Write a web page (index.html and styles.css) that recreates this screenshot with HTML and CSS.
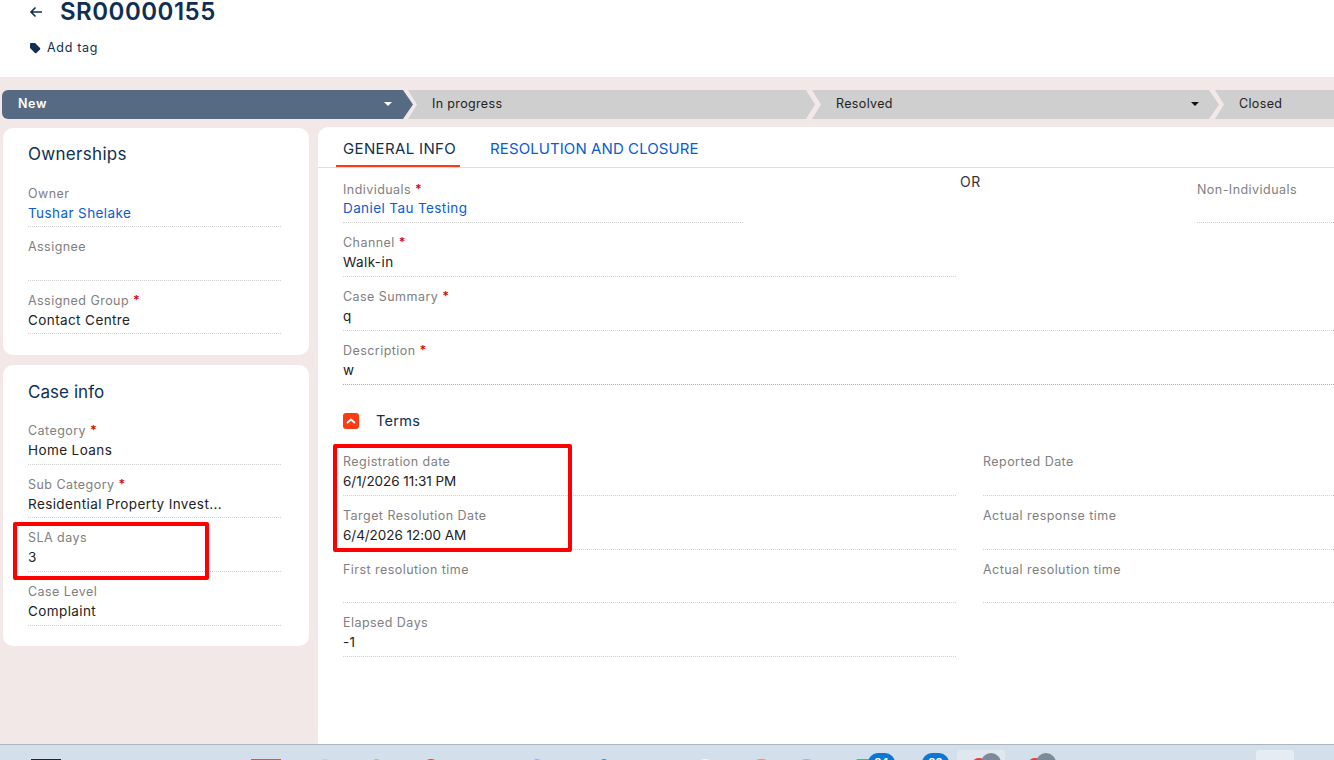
FILE: index.html
```html
<!DOCTYPE html>
<html lang="en">
<head>
<meta charset="utf-8">
<title>SR00000155</title>
<link rel="stylesheet" href="styles.css">
</head>
<body>
<div class="app">
  <header class="head">
    <div class="head-top">
      <svg class="back" viewBox="0 0 14 12" width="14" height="12"><path d="M13 6H2M6.500 1.500 2 6l4.500 4.500" fill="none" stroke="#0f2f52" stroke-width="1.600"/></svg>
      <h1>SR00000155</h1>
    </div>
    <div class="tag">
      <svg viewBox="0 0 12 12" width="12" height="12"><path d="M1 2.200C1 1.500 1.500 1 2.200 1H6l5 5c.4.4.4 1 0 1.400L7.400 11c-.4.4-1 .4-1.400 0L1 6Z" fill="#0f2f52"/></svg>
      <span>Add tag</span>
    </div>
  </header>
  <main class="main">
    <nav class="path">
      <div class="step step-new"><span>New</span><i class="caret caret-w"></i></div>
      <div class="step step-mid"><span>In progress</span></div>
      <div class="step step-res"><span>Resolved</span><i class="caret"></i></div>
      <div class="step step-end"><span>Closed</span></div>
    </nav>
    <div class="cols">
      <aside class="side">
        <section class="card card-own">
          <h2>Ownerships</h2>
          <div class="field"><label>Owner</label><div class="val link">Tushar Shelake</div></div>
          <div class="field"><label>Assignee</label><div class="val"></div></div>
          <div class="field"><label>Assigned Group <b>*</b></label><div class="val">Contact Centre</div></div>
        </section>
        <section class="card card-case">
          <h2>Case info</h2>
          <div class="field"><label>Category <b>*</b></label><div class="val">Home Loans</div></div>
          <div class="field"><label>Sub Category <b>*</b></label><div class="val">Residential Property Invest...</div></div>
          <div class="field"><label>SLA days</label><div class="val">3</div></div>
          <div class="field"><label>Case Level</label><div class="val">Complaint</div></div>
          <div class="mark mark-sla"></div>
        </section>
      </aside>
      <section class="panel">
        <div class="tabs">
          <div class="tab tab-on">GENERAL INFO</div>
          <div class="tab tab-off">RESOLUTION AND CLOSURE</div>
        </div>
        <div class="body">
          <div class="row-ind">
            <div class="field f-ind"><label>Individuals <b>*</b></label><div class="val link">Daniel Tau Testing</div></div>
            <div class="or">OR</div>
            <div class="field f-non"><label>Non-Individuals</label><div class="val"></div></div>
          </div>
          <div class="field f-half"><label>Channel <b>*</b></label><div class="val">Walk-in</div></div>
          <div class="field"><label>Case Summary <b>*</b></label><div class="val">q</div></div>
          <div class="field f-desc"><label>Description <b>*</b></label><div class="val">w</div></div>
          <div class="terms">
            <span class="toggle"><svg viewBox="0 0 10 6" width="10" height="6"><path d="M1 5 5 1.500 9 5" fill="none" stroke="#fff" stroke-width="1.800"/></svg></span>
            <span>Terms</span>
          </div>
          <div class="grid">
            <div class="mark mark-reg"></div>
            <div class="field"><label>Registration date</label><div class="val val-date">6/1/2026 11:31 PM</div></div>
            <div class="field"><label>Reported Date</label><div class="val"></div></div>
            <div class="field"><label>Target Resolution Date</label><div class="val val-date">6/4/2026 12:00 AM</div></div>
            <div class="field"><label>Actual response time</label><div class="val"></div></div>
            <div class="field"><label>First resolution time</label><div class="val"></div></div>
            <div class="field"><label>Actual resolution time</label><div class="val"></div></div>
            <div class="field"><label>Elapsed Days</label><div class="val">-1</div></div>
          </div>
        </div>
      </section>
    </div>
  </main>
  <footer class="taskbar">
    <i class="tb tb-black"></i>
    <i class="tb tb-red"></i>
    <i class="tb dot d1"></i>
    <i class="tb dot d2"></i>
    <i class="tb dot d3"></i>
    <i class="tb dot d4"></i>
    <i class="tb dot d5"></i>
    <i class="tb dot d6"></i>
    <i class="tb dot d7"></i>
    <i class="tb dot d8"></i>
    <i class="tb dot d9"></i>
    <i class="tb tb-tile"></i>
    <i class="tb tb-tile2"></i>
    <i class="tb dot d10"></i>
    <i class="tb dot d11"></i>
    <i class="tb tb-b1">84</i>
    <i class="tb tb-b2">80</i>
    <i class="tb tb-g1"></i>
    <i class="tb tb-g2"></i>
  </footer>
</div>
</body>
</html>
```
FILE: styles.css
```css
* { box-sizing: border-box; }
html, body { margin: 0; height: 100%; }
body { font-family: "Inter", "Noto Sans", sans-serif; color: #222; overflow: hidden; background: #fff; }
.app { width: 1334px; height: 760px; display: flex; flex-direction: column; overflow: hidden; position: relative; }

.head { height: 77px; flex: none; background: #fff; padding: 0 0 0 29px; color: #0f2f52; }
.head-top { display: flex; align-items: center; gap: 17px; height: 23px; }
.back { flex: none; }
h1 { margin: 0; font-size: 24px; font-weight: 600; line-height: 23px; letter-spacing: .5px; }
.tag { display: flex; align-items: center; gap: 6px; margin-top: 17px; font-size: 12.500px; line-height: 16px; letter-spacing: .7px; }

.main { flex: 1; background: #f2e8e8; padding-top: 13px; min-height: 0; display: flex; flex-direction: column; }
.path { display: flex; height: 29px; padding-left: 2px; flex: none; }
.step { height: 29px; padding-bottom: 2px; display: flex; align-items: center; justify-content: space-between; background: #cfcfcf; font-size: 12.500px; letter-spacing: .35px; color: #222; flex: none; }
.step-new { width: 411px; margin-right: -5px; padding-left: 16px; padding-right: 21px; background: #566b83; color: #fff; border-radius: 6px 0 0 6px; font-weight: 600; letter-spacing: .6px; clip-path: polygon(0 0, 401px 0, 100% 50%, 401px 100%, 0 100%); }
.step-mid { width: 407px; margin-right: -3px; padding-left: 24px; clip-path: polygon(0 0, 398px 0, 100% 50%, 398px 100%, 0 100%, 9px 50%); }
.step-res { width: 407px; margin-right: -4px; padding-left: 24px; padding-right: 20px; clip-path: polygon(0 0, 397px 0, 100% 50%, 397px 100%, 0 100%, 9px 50%); }
.step-end { flex: 1; padding-left: 24px; clip-path: polygon(0 0, 100% 0, 100% 100%, 0 100%, 9px 50%); }
.caret { width: 0; height: 0; border: 4px solid transparent; border-top: 4px solid #111; border-bottom: 0; }
.caret-w { border-top-color: #fff; }

.cols { display: flex; flex: 1; min-height: 0; padding: 8px 0 0 3px; gap: 9px; }
.side { width: 306px; flex: none; display: flex; flex-direction: column; gap: 10px; padding-top: 1px; }
.card { background: #fff; border-radius: 10px; padding: 14px 28px 20px 25px; position: relative; }
.card-own { height: 227px; }
.card-case { height: 281px; padding-top: 15px; }
h2 { margin: 0 0 14.500px; font-size: 17px; font-weight: 400; line-height: 24px; letter-spacing: .3px; color: #0f2f52; }
.card-case h2 { margin-bottom: 14px; letter-spacing: .05px; }

.field { height: 46.670px; margin-bottom: 7px; padding-top: 4px; border-bottom: 1px dotted #d0d0d0; }
.field label { display: block; font-size: 12.500px; line-height: 18px; letter-spacing: .45px; color: #808080; }
.field label b { color: #d00; font-weight: 600; }
.val { font-size: 13.500px; line-height: 20px; letter-spacing: .4px; color: #222; min-height: 20px; white-space: nowrap; }
.val-date { letter-spacing: -.05px; }
.link { color: #0b5cd0; }

.panel { flex: 1; background: #fff; border-radius: 10px 0 0 0; min-width: 0; }
.tabs { display: flex; height: 41px; padding-left: 18px; gap: 23px; border-bottom: 1px solid #ddd; }
.tab { padding: 0 7px; line-height: 43px; font-size: 15px; letter-spacing: .35px; color: #0b5cd0; height: 40px; }
.tab-on { color: #0f2f52; padding-right: 4px; border-bottom: 2px solid #fb3c14; }
.tab-off { letter-spacing: .08px; }

.body { padding: 0 0 0 25px; }
.row-ind { display: flex; height: 62.330px; }
.f-ind { width: 400px; height: 54.670px; padding-top: 13px; margin: 0; }
.f-ind .val { margin-top: -1px; }
.or { width: 454px; padding: 5px 0 0 217px; font-size: 14px; line-height: 18px; letter-spacing: .5px; color: #333; }
.f-non { flex: 1; height: 54.670px; padding-top: 13px; margin: 0; }
.f-half { width: 613px; }
.f-desc { border-bottom-color: #aaa; height: 47px; margin: 0; }

.terms { display: flex; align-items: center; gap: 17px; height: 24px; margin-top: 24.330px; font-size: 14.500px; letter-spacing: .3px; color: #0f2f52; }
.toggle { width: 16px; height: 16px; border-radius: 3px; background: #fb3c14; display: flex; align-items: center; justify-content: center; }

.grid { display: grid; grid-template-columns: 613px 351px; column-gap: 27px; margin-top: 16px; position: relative; }
.grid .field { height: 46.800px; }
.mark { position: absolute; border: 4px solid #f00; border-radius: 2px; pointer-events: none; }
.mark-reg { left: -10px; top: -5px; width: 239px; height: 108px; }
.mark-sla { left: 10px; top: 157px; width: 196px; height: 58px; }

.taskbar { height: 16px; flex: none; position: relative; background: #d3e0eb; border-top: 1px solid #aeb7c0; overflow: hidden; }
.tb { position: absolute; display: block; font-style: normal; }
.tb-black { left: 31px; top: 14px; width: 30px; height: 4px; background: #1e2430; }
.tb-red { left: 251px; top: 14px; width: 30px; height: 4px; background: #ef4a3c; }
.dot { top: 14px; height: 8px; border-radius: 50%; }
.d1 { left: 320px; width: 10px; background: #c3cbd2; }
.d2 { left: 372px; width: 9px; background: #aeb6ba; }
.d3 { left: 425px; width: 12px; background: #e5443c; }
.d4 { left: 533px; width: 8px; background: #a8a8e8; }
.d5 { left: 600px; width: 8px; background: #1e9be0; }
.d6 { left: 698px; width: 14px; background: #f4f6f8; }
.d7 { left: 754px; width: 15px; background: #e08f6f; }
.d8 { left: 799px; width: 15px; background: #aab4c4; }
.d9 { left: 856px; width: 14px; background: #3cc46c; border-radius: 2px; }
.d10 { left: 973px; width: 12px; top: 13px; background: #e0403c; }
.d11 { left: 1029px; width: 12px; top: 13px; background: #e0403c; }
.tb-tile { left: 957px; top: 5px; width: 48px; height: 14px; background: #e0e7ef; border-radius: 3px; }
.tb-tile2 { left: 1256px; top: 5px; width: 38px; height: 14px; background: #e6ecf3; border-radius: 3px; }
.tb-b1, .tb-b2 { top: 8px; width: 27px; height: 20px; border-radius: 10px; background: #0a78d6; color: #fff; font-size: 11px; font-weight: 700; text-align: center; line-height: 18px; }
.tb-b1 { left: 868px; }
.tb-b2 { left: 922px; }
.tb-g1, .tb-g2 { top: 8px; width: 20px; height: 20px; border-radius: 50%; background: #7a8c99; }
.tb-g1 { left: 981px; }
.tb-g2 { left: 1036px; }
```
